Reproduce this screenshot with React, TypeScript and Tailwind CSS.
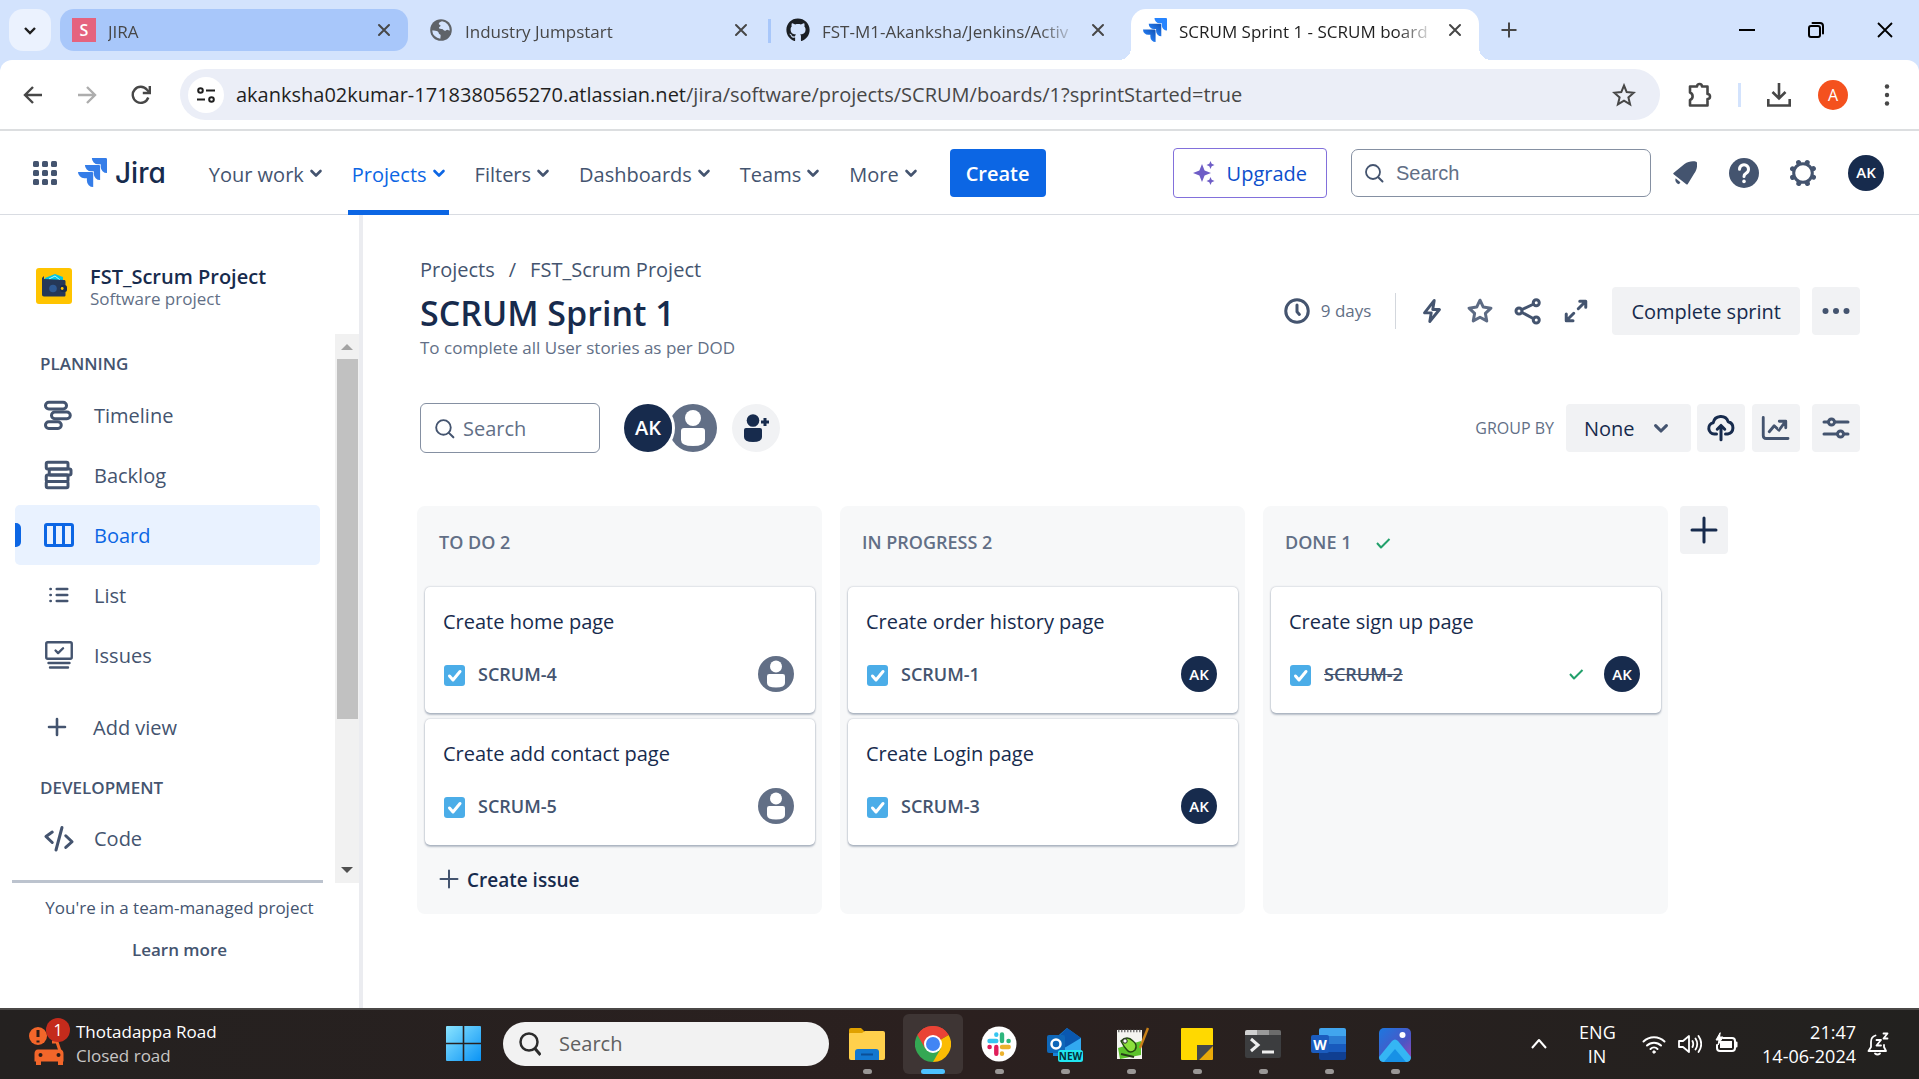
import React from "react";
import { FaGithub } from "react-icons/fa";

type Kids = { children: React.ReactNode };

function Svg({ size = 36, box = 24, children, className = "" }: { size?: number; box?: number; className?: string } & Kids) {
  return (
    <svg
      width={size}
      height={size}
      viewBox={`0 0 ${box} ${box}`}
      fill="none"
      stroke="currentColor"
      strokeWidth={2}
      strokeLinecap="round"
      strokeLinejoin="round"
      aria-hidden="true"
      className={`shrink-0 ${className}`}
    >
      {children}
    </svg>
  );
}

function JiraMark({ size }: { size: number }) {
  return (
    <svg width={size} height={size} viewBox="0 0 24 24" aria-hidden="true" className="shrink-0">
      <defs>
        <linearGradient id="jm1" x1="1" y1="0" x2="0.3" y2="0.8">
          <stop offset="0.15" stopColor="#1558bc" />
          <stop offset="1" stopColor="#2684ff" />
        </linearGradient>
      </defs>
      <path d="M11.57 11.51H0a5.22 5.22 0 0 0 5.23 5.22h2.13v2.06A5.22 5.22 0 0 0 12.58 24V12.52a1.01 1.01 0 0 0-1.01-1.01z" fill="url(#jm1)" />
      <path d="M17.3 5.76H5.72a5.22 5.22 0 0 0 5.22 5.21h2.13v2.06a5.22 5.22 0 0 0 5.22 5.21V6.76a1 1 0 0 0-1-1z" fill="url(#jm1)" />
      <path d="M23.01 0H11.46a5.22 5.22 0 0 0 5.21 5.22h2.13v2.05A5.22 5.22 0 0 0 24 12.48V1.01A1 1 0 0 0 23.01 0z" fill="#2684ff" />
    </svg>
  );
}

/* ---------- Browser ---------- */

function CloseX({ label }: { label: string }) {
  return (
    <button aria-label={label} className="grid size-6 shrink-0 place-items-center">
      <Svg size={14} box={14}>
        <path d="M2 2l10 10M12 2L2 12" />
      </Svg>
    </button>
  );
}

function Tab({ icon, title, state }: { icon: React.ReactNode; title: string; state: "group" | "idle" | "active" }) {
  const bg = state === "group" ? "h-[42px] rounded-[14px] bg-[#a8c7fa]" : state === "active" ? "h-[51px] rounded-t-[15px] bg-white pb-[9px]" : "h-[42px]";
  return (
    <div className={`relative flex w-[348px] items-center px-3 text-[#474747] ${bg}`}>
      {state === "active" && (
        <>
          <span className="absolute -left-3 bottom-0 size-3 bg-[radial-gradient(circle_at_0_0,transparent_12px,white_12px)]" />
          <span className="absolute -right-3 bottom-0 size-3 bg-[radial-gradient(circle_at_100%_0,transparent_12px,white_12px)]" />
        </>
      )}
      {icon}
      <span
        className={`ml-3 mr-2 flex-1 overflow-hidden whitespace-nowrap pt-1 text-[17px] leading-6 ${state === "active" ? "text-[#1f1f1f]" : "text-[#474747]"} [mask-image:linear-gradient(to_right,black_85%,transparent)]`}
      >
        {title}
      </span>
      <CloseX label={`Close ${title}`} />
    </div>
  );
}

function TabStrip() {
  return (
    <div className="flex h-[60px] gap-[9px] bg-[#d3e3fd] pl-[9px] pt-[9px]">
      <button aria-label="Search tabs" className="grid h-[42px] w-[42px] place-items-center rounded-[14px] bg-[#ebf2fe] text-[#1f1f1f]">
        <Svg size={14} box={14}>
          <path d="M2 5l5 5 5-5" strokeWidth="2.4" strokeLinecap="butt" strokeLinejoin="miter" />
        </Svg>
      </button>
      <Tab
        state="group"
        title="JIRA"
        icon={<span className="grid size-6 shrink-0 place-items-center bg-[#e5637f] text-[16px] font-semibold leading-6 text-white">S</span>}
      />
      <Tab
        state="idle"
        title="Industry Jumpstart"
        icon={
          <svg width="24" height="24" viewBox="0 0 24 24" aria-hidden="true" className="shrink-0">
            <circle cx="12" cy="12" r="10.8" fill="#5f6368" />
            <path
              d="M3.2 12.4c2.300 0 4.200 .3 5.600 1.100 1.300 .8 .6 2.200 1.800 2.700 1 .4 1.200 1 1 2.100l-.3 2.400A8.800 8.800 0 0 1 3.200 12.400zM13 3.300c-1.600 .4-3.300 1.500-3.200 2.600 .1 1 1.500 .6 1.700 1.500 .3 1-1.800 1.200-1.600 2.500 .2 1.200 2 .7 3.400 1.200 1 .5 1.300 1.600 2.600 1.700 1 .1 1.400-1.100 2.400-1.100.9 0 1.600 .8 2.500 .9A8.800 8.800 0 0 0 13 3.300z"
              fill="#d3e3fd"
            />
          </svg>
        }
      />
      <div className="relative">
        <span className="absolute -left-[6px] top-[10px] h-6 w-[3px] bg-[#a8c7fa]" />
        <Tab state="idle" title="FST-M1-Akanksha/Jenkins/Activ" icon={<FaGithub size={24} color="#1b1f24" className="shrink-0" />} />
      </div>
      <Tab state="active" title="SCRUM Sprint 1 - SCRUM board" icon={<JiraMark size={24} />} />
      <button aria-label="New tab" className="grid h-[42px] w-[42px] place-items-center text-[#474747]">
        <Svg size={18} box={18}>
          <path d="M9 1.500v15M1.500 9h15" strokeLinecap="butt" />
        </Svg>
      </button>
      <div className="-mt-[9px] ml-auto flex text-black">
        <button aria-label="Minimize" className="grid w-[69px] place-items-center">
          <Svg size={16} box={16}>
            <path d="M0 8h16" strokeLinecap="butt" />
          </Svg>
        </button>
        <button aria-label="Restore" className="grid w-[69px] place-items-center">
          <Svg size={16} box={16}>
            <rect x="1" y="4" width="11" height="11" rx="2" />
            <path d="M4.500 1H12a3 3 0 0 1 3 3v7.500" />
          </Svg>
        </button>
        <button aria-label="Close window" className="grid w-[69px] place-items-center">
          <Svg size={16} box={16}>
            <path d="M1 1l14 14M15 1L1 15" strokeLinecap="butt" strokeWidth="1.800" />
          </Svg>
        </button>
      </div>
    </div>
  );
}

function BarButton({ label, children, className = "" }: { label: string; className?: string } & Kids) {
  return (
    <button aria-label={label} className={`grid size-12 shrink-0 place-items-center ${className}`}>
      {children}
    </button>
  );
}

function Toolbar() {
  return (
    <div className="bg-[#d3e3fd]">
      <div className="flex h-[71px] items-center rounded-t-[12px] border-b-2 border-[#dcdee0] bg-white pl-[9px] pr-2 text-[#474747]">
        <div className="flex gap-1.5">
          <BarButton label="Back">
            <Svg size={20} box={20}>
              <path d="M19 10H2M10 2l-8 8 8 8" strokeWidth="2.400" strokeLinecap="butt" strokeLinejoin="miter" />
            </Svg>
          </BarButton>
          <BarButton label="Forward" className="text-[#adadad]">
            <Svg size={20} box={20}>
              <path d="M1 10h17M10 2l8 8-8 8" strokeWidth="2.400" strokeLinecap="butt" strokeLinejoin="miter" />
            </Svg>
          </BarButton>
          <BarButton label="Reload">
            <Svg size={20} box={20}>
              <path d="M17.300 12.500A8 8 0 1 1 16 4.800L18 7" strokeWidth="2.400" strokeLinecap="butt" />
              <path d="M18.800 1v7h-7" strokeWidth="2.400" strokeLinecap="butt" strokeLinejoin="miter" />
            </Svg>
          </BarButton>
        </div>
        <div className="ml-[15px] mr-4 flex h-[51px] flex-1 items-center rounded-full bg-[#ebeef7] pl-2 pr-6">
          <button aria-label="View site information" className="mr-3 grid size-9 shrink-0 place-items-center rounded-full bg-white text-[#1f1f1f]">
            <Svg size={18} box={18}>
              <circle cx="3.500" cy="4.500" r="2.300" />
              <path d="M9 4.500h9M0 13.500h8" strokeLinecap="butt" />
              <circle cx="14.500" cy="13.500" r="2.300" />
            </Svg>
          </button>
          <div className="min-w-0 flex-1 whitespace-nowrap text-[20px] leading-7 text-[#474747]">
            <span className="text-[#1f1f1f]">akanksha02kumar-1718380565270.atlassian.net</span>/jira/software/projects/SCRUM/boards/1?sprintStarted=true
          </div>
          <button aria-label="Bookmark this tab">
            <Svg size={24}>
              <path d="M12 2.500l2.700 6.600 7.100 .6-5.400 4.700 1.700 7-6.100-3.800-6.100 3.800 1.700-7-5.400-4.700 7.100-.6z" strokeLinejoin="miter" />
            </Svg>
          </button>
        </div>
        <BarButton label="Extensions">
          <Svg size={27} box={27}>
            <path d="M3 5.500h7a2.500 2.500 0 0 1 5 0h5.500V13a2.500 2.500 0 0 1 0 5v6.500H3V19a4 4 0 0 0 0-7.500z" strokeWidth="2.600" />
          </Svg>
        </BarButton>
        <span className="mx-[14px] h-6 w-[3px] bg-[#d3e3fd]" />
        <BarButton label="Downloads">
          <Svg size={24}>
            <path d="M12 0v15M5.500 9l6.500 6.500L18.500 9M1.300 16v6.500h21.400V16" strokeWidth="2.600" strokeLinecap="butt" strokeLinejoin="miter" />
          </Svg>
        </BarButton>
        <BarButton label="Profile" className="ml-1.5">
          <span className="grid size-[30px] place-items-center rounded-full bg-[#f4511e] text-[16px] text-white">A</span>
        </BarButton>
        <BarButton label="Menu" className="ml-1.5">
          <Svg size={24}>
            <g fill="currentColor" stroke="none">
              <circle cx="12" cy="3.500" r="2.200" />
              <circle cx="12" cy="12" r="2.200" />
              <circle cx="12" cy="20.500" r="2.200" />
            </g>
          </Svg>
        </BarButton>
      </div>
    </div>
  );
}

/* ---------- Jira header ---------- */

const nav = ["Your work", "Projects", "Filters", "Dashboards", "Teams", "More"];

function Chevron({ size = 20 }: { size?: number }) {
  return (
    <Svg size={size} box={20}>
      <path d="M5.500 8l4.500 4.500L14.500 8" strokeWidth="2.600" />
    </Svg>
  );
}

function Avatar({ className }: { className: string }) {
  return <span className={`grid shrink-0 place-items-center rounded-full bg-[#172b4d] font-semibold text-white ${className}`}>AK</span>;
}

function SearchIcon({ size = 24 }: { size?: number }) {
  return (
    <Svg size={size}>
      <circle cx="11" cy="11" r="7" strokeWidth="1.800" />
      <path d="M16.200 16.200L20.500 20.500" />
    </Svg>
  );
}

function JiraHeader() {
  return (
    <header className="flex h-[84px] items-center border-b border-[#d9dce2] bg-white pl-[33px] pr-[29px] text-[#44546f]">
      <button aria-label="Switch to" className="mr-[21px]">
        <svg width="24" height="24" viewBox="0 0 24 24" fill="currentColor" aria-hidden="true">
          {[0, 9, 18].map((y) => [0, 9, 18].map((x) => <rect key={`${x}-${y}`} x={x} y={y} width="6" height="6" rx="1.500" />))}
        </svg>
      </button>
      <a href="#home" className="mr-[39px] flex items-center gap-2">
        <svg width="29" height="29" viewBox="0 0 24 24" fill="#357de8" aria-hidden="true">
          <path d="M11.570 11.510H0a5.220 5.220 0 0 0 5.230 5.220h2.130v2.060A5.220 5.220 0 0 0 12.580 24V12.520a1.010 1.010 0 0 0-1.010-1.010z" />
          <path d="M17.300 5.760H5.720a5.220 5.220 0 0 0 5.220 5.210h2.130v2.060a5.220 5.220 0 0 0 5.220 5.210V6.760a1 1 0 0 0-1-1z" />
          <path d="M23.010 0H11.460a5.220 5.220 0 0 0 5.210 5.220h2.130v2.050A5.220 5.220 0 0 0 24 12.480V1.010A1 1 0 0 0 23.010 0z" />
        </svg>
        <span className="font-['Inter',sans-serif] text-[28px] font-medium leading-8 text-[#172b4d] [font-feature-settings:'cv11']">Jira</span>
      </a>
      <nav className="flex h-full gap-[22px]">
        {nav.map((n) => (
          <button key={n} className={`relative flex items-center gap-0.5 pl-1 text-[20px] font-medium leading-7 ${n === "Projects" ? "text-[#0c66e4]" : ""}`}>
            <span className="pt-1">{n}</span>
            <Chevron />
            {n === "Projects" && <span className="absolute -bottom-px left-0 right-0 h-[5px] bg-[#0c66e4]" />}
          </button>
        ))}
      </nav>
      <button className="ml-[29px] h-12 rounded-[4px] bg-[#0c66e4] px-4 pt-0.5 text-[20px] font-semibold text-white">Create</button>
      <button className="ml-auto flex h-[50px] items-center gap-3 rounded-[4px] border border-[#8270db] px-[19px] text-[20px] font-medium text-[#0c4fcc]">
        <svg width="22" height="24" viewBox="0 0 22 24" fill="#6e5dc6" aria-hidden="true">
          <path d="M9 3l2.600 6.400L18 12l-6.400 2.600L9 21l-2.600-6.400L0 12l6.400-2.600z" />
          <path d="M17.500 0l1.200 2.800L21.500 4l-2.800 1.200L17.500 8l-1.200-2.800L13.500 4l2.800-1.200zM17.500 16l1.200 2.800 2.800 1.200-2.800 1.200-1.200 2.800-1.200-2.800-2.800-1.200 2.800-1.200z" />
        </svg>
        <span className="pt-0.5">Upgrade</span>
      </button>
      <label className="ml-6 mr-2.5 flex h-12 w-[300px] items-center gap-2.5 rounded-[7px] border border-[#8590a2] px-2.5">
        <SearchIcon />
        <input aria-label="Search Jira" placeholder="Search" className="w-full min-w-0 font-['Liberation_Sans',sans-serif] text-[20px] outline-none placeholder:text-[#626f86]" />
      </label>
      <div className="flex items-center gap-[11px]">
        <BarButton label="Notifications">
          <svg width="24" height="24" viewBox="0 0 24 24" fill="currentColor" aria-hidden="true">
            <path d="M.5 12L11.500 3C15 .4 20-.2 23.200 .8q.8.3.8 1C24.500 5.500 23.600 9 21.200 12.600L14.800 23q-.6 1-1.500 .3L.6 13.300q-.7-.6-.1-1.300z" />
            <path d="M2.600 17.200L7.400 21.300 6 23.200A4.500 4.500 0 0 1 2.600 17.200z" />
          </svg>
        </BarButton>
        <BarButton label="Help">
          <Svg size={36}>
            <circle cx="12" cy="12" r="10" fill="currentColor" stroke="none" />
            <path d="M9 9.500a3 3 0 1 1 4.500 2.600c-1 .6-1.500 1-1.500 2.200" stroke="#fff" />
            <circle cx="12" cy="17.600" r="1.200" fill="#fff" stroke="none" />
          </Svg>
        </BarButton>
        <BarButton label="Settings">
          <Svg size={30} box={30}>
            <circle cx="15" cy="15" r="9.300" strokeWidth="3" />
            {[22, 67, 112, 157, 202, 247, 292, 337].map((a) => (
              <path key={a} d="M15 4.200V3.700" strokeWidth="5" transform={`rotate(${a} 15 15)`} />
            ))}
          </Svg>
        </BarButton>
        <BarButton label="Account" className="ml-1">
          <Avatar className="size-9 text-[15px]" />
        </BarButton>
      </div>
    </header>
  );
}

/* ---------- Sidebar ---------- */

const sideIcons: Record<string, React.ReactNode> = {
  Timeline: (
    <g>
      <rect x="3" y="3.500" width="14" height="4.500" rx="2.200" />
      <rect x="7" y="10" width="12.500" height="4.500" rx="2.200" />
      <rect x="3" y="16.500" width="10.500" height="4.500" rx="2.200" />
    </g>
  ),
  Backlog: (
    <g>
      <rect x="3.500" y="3.500" width="14.500" height="4.500" rx="1" />
      <rect x="5.500" y="8" width="14.500" height="4" rx="1" />
      <rect x="3.500" y="12" width="14.500" height="4.300" rx="1" />
      <rect x="3.500" y="16.300" width="14.500" height="4.200" rx="1" />
    </g>
  ),
  Board: (
    <g>
      <rect x="3" y="5" width="18" height="14" rx="1" />
      <path d="M9 5v14M15 5v14" />
    </g>
  ),
  List: (
    <g strokeWidth="1.700">
      <path d="M6.300 8h.2M6.300 12h.2M6.300 16h.2M10.500 8h7M10.500 12h7M10.500 16h7" />
    </g>
  ),
  Issues: (
    <g strokeWidth="1.600">
      <rect x="3.500" y="3.500" width="17" height="11" rx="1" />
      <path d="M9.700 9l1.700 1.700L14.700 7.500M5 17.300h14M6 20.300h12" />
    </g>
  ),
  Code: (
    <g>
      <path d="M7.500 8l-4.200 3 4.200 4M16.500 10.500l4.200 4-4.200 3.800M14 5l-4 15" />
    </g>
  ),
};

function SideLink({ name, active = false }: { name: string; active?: boolean }) {
  return (
    <a
      href={`#${name.toLowerCase()}`}
      className={`relative ml-[15px] flex h-[60px] w-[305px] items-center overflow-hidden rounded-[5px] pl-[26px] text-[20px] leading-7 ${active ? "bg-[#e9f2ff] text-[#0c66e4]" : ""}`}
    >
      {active && <span className="absolute left-0 top-[18px] h-6 w-1.5 rounded-r-[5px] bg-[#0c66e4]" />}
      <Svg>{sideIcons[name]}</Svg>
      <span className="ml-[17px] pt-0.5">{name}</span>
    </a>
  );
}

function Sidebar() {
  return (
    <aside className="flex w-[363px] shrink-0 flex-col border-r-4 border-[#ebecf0] pt-[53px] text-[#44546f]">
      <div className="flex h-[66px] items-start pl-9">
        <svg width="36" height="36" viewBox="0 0 36 36" aria-hidden="true">
          <rect width="36" height="36" rx="3" fill="#ffc400" />
          <path d="M9 10l10-4 8 3v4H8z" fill="#00c7e5" />
          <path d="M13 11l6-3 5 4" stroke="#b3f5ff" fill="none" />
          <path d="M6 10l2-2v3l20 1c1 0 1.500.5 1.500 1.500V27c0 1-.5 1.500-1.500 1.500H8c-1.300 0-2-.7-2-2z" fill="#253858" />
          <circle cx="17" cy="20.500" r="3.800" fill="#2f5a94" />
          <rect x="24" y="17" width="7" height="7" rx="2.500" fill="#172b4d" />
          <circle cx="26.200" cy="20.500" r="1.400" fill="#ffc400" />
        </svg>
        <div className="-mt-[3px] ml-[18px]">
          <div className="text-[20px] font-semibold leading-6 text-[#172b4d]">FST_Scrum Project</div>
          <div className="text-[17px] leading-5 text-[#626f86]">Software project</div>
        </div>
      </div>
      <div className="flex h-[549px]">
        <nav className="relative flex w-[335px] flex-col overflow-hidden pt-3">
          <h2 className="mb-1 pl-10 text-[17px] font-semibold leading-[35px]">PLANNING</h2>
          <SideLink name="Timeline" />
          <SideLink name="Backlog" />
          <SideLink name="Board" active />
          <SideLink name="List" />
          <SideLink name="Issues" />
          <button className="mt-3 flex h-[60px] items-center pl-[45px] text-[20px] leading-7">
            <Svg size={24}>
              <path d="M12 4v16M4 12h16" strokeWidth="2.600" />
            </Svg>
            <span className="ml-6 pt-0.5">Add view</span>
          </button>
          <h2 className="mt-[13px] pl-10 text-[17px] font-semibold leading-[35px]">DEVELOPMENT</h2>
          <div className="mt-[3px]">
            <SideLink name="Code" />
          </div>
          <span className="absolute bottom-0 left-3 right-3 h-[3px] bg-[#bcc3ce]" />
        </nav>
        <div className="flex w-6 flex-col items-center bg-[#f1f1f1]">
          <span className="mt-[10px] border-x-[6px] border-b-[6px] border-x-transparent border-b-[#a3a3a3]" />
          <span className="mt-[9px] h-[360px] w-[21px] bg-[#c1c1c1]" />
          <span className="mb-[10px] mt-auto border-x-[6px] border-t-[6px] border-x-transparent border-t-[#505050]" />
        </div>
      </div>
      <div className="flex flex-col items-center pt-[13px] text-[17px] leading-6">
        <p>You're in a team-managed project</p>
        <a href="#learn" className="mt-[18px] font-semibold">
          Learn more
        </a>
      </div>
    </aside>
  );
}

/* ---------- Board ---------- */

function IconButton({ label, children, className = "" }: { label: string; className?: string } & Kids) {
  return (
    <button aria-label={label} className={`grid size-12 shrink-0 place-items-center rounded-[4px] bg-[#f1f2f4] ${className}`}>
      {children}
    </button>
  );
}

function Person({ size }: { size: number }) {
  return (
    <svg width={size} height={size} viewBox="0 0 48 48" role="img" aria-label="Unassigned" className="shrink-0">
      <circle cx="24" cy="24" r="24" fill="#626f86" />
      <circle cx="24" cy="14" r="8" fill="#fff" />
      <path d="M15 24h18q3 0 3 3v9q0 6-12 6t-12-6v-9q0-3 3-3z" fill="#fff" />
    </svg>
  );
}

function Tick() {
  return (
    <Svg size={16} box={16} className="text-[#22a06b]">
      <path d="M2 8l4 4.500L14.500 4" strokeLinecap="butt" />
    </Svg>
  );
}

type Issue = { key: string; title: string; mine?: boolean; done?: boolean };

function Card({ issue }: { issue: Issue }) {
  return (
    <article className="rounded-[5px] bg-white px-[18px] pb-[21px] pr-[21px] pt-5 text-[#172b4d] shadow-[0_2px_2px_rgba(9,30,66,0.25),0_0_2px_rgba(9,30,66,0.31)]">
      <h3 className="text-[20px] leading-[30px]">{issue.title}</h3>
      <div className="mt-[19px] flex h-9 items-center">
        <svg width="23" height="23" viewBox="0 0 23 23" role="img" aria-label="Task" className="mt-[3px]">
          <rect x="1" y="1" width="21" height="21" rx="3" fill="#4bade8" />
          <path d="M6.500 12l3.500 4L17 7.500" stroke="#fff" strokeWidth="3" fill="none" strokeLinecap="round" strokeLinejoin="round" />
        </svg>
        <span className={`ml-3 text-[18px] font-semibold leading-6 text-[#44546f] ${issue.done ? "line-through" : ""}`}>{issue.key}</span>
        <span className="ml-auto flex items-center gap-5">
          {issue.done && <Tick />}
          {issue.mine ? <Avatar className="size-9 text-[15px]" /> : <Person size={36} />}
        </span>
      </div>
    </article>
  );
}

const columns: { name: string; done?: boolean; create?: boolean; issues: Issue[] }[] = [
  { name: "TO DO 2", create: true, issues: [{ key: "SCRUM-4", title: "Create home page" }, { key: "SCRUM-5", title: "Create add contact page" }] },
  { name: "IN PROGRESS 2", issues: [{ key: "SCRUM-1", title: "Create order history page", mine: true }, { key: "SCRUM-3", title: "Create Login page", mine: true }] },
  { name: "DONE 1", done: true, issues: [{ key: "SCRUM-2", title: "Create sign up page", mine: true, done: true }] },
];

function Board() {
  return (
    <main className="min-w-0 flex-1 pl-[54px] pr-[59px] pt-[41px] text-[#44546f]">
      <div className="flex items-start justify-between pl-[3px]">
        <div>
          <nav className="flex gap-3.5 text-[20px] leading-7">
            <a href="#projects">Projects</a>
            <span>/</span>
            <a href="#fst">FST_Scrum Project</a>
          </nav>
          <h1 className="mt-1 text-[34px] font-semibold leading-[50px] text-[#172b4d]">SCRUM Sprint 1</h1>
          <p className="-mt-0.5 text-[17px] leading-6 text-[#626f86]">To complete all User stories as per DOD</p>
        </div>
        <div className="mt-[31px] flex items-center">
          <Svg>
            <circle cx="12" cy="12" r="7.500" />
            <path d="M12 8v4.500l1.600 1.800" />
          </Svg>
          <span className="ml-1.5 text-[17px] text-[#626f86]">9 days</span>
          <span className="ml-6 mr-3 h-9 w-px bg-[#d3d7dd]" />
          <BarButton label="Automation">
            <Svg>
              <path d="M13.500 5L7 13.200h4.500L10.500 19l6.500-8h-4.500z" strokeWidth="1.900" />
            </Svg>
          </BarButton>
          <BarButton label="Star board" className="text-[#5d6b84]">
            <Svg>
              <path d="M12 4.800l2.200 4.600 5.100.7-3.700 3.500.9 5-4.500-2.400-4.500 2.400.9-5-3.700-3.500 5.100-.7z" />
            </Svg>
          </BarButton>
          <BarButton label="Share">
            <Svg>
              <circle cx="6" cy="12" r="2" />
              <circle cx="17.500" cy="6.500" r="2" />
              <circle cx="17.500" cy="18" r="2" />
              <path d="M8 11l7.500-3.500M8 13l7.500 4" />
            </Svg>
          </BarButton>
          <BarButton label="Full screen">
            <Svg>
              <path d="M14.500 5.500h4v4M18 6l-4.500 4.500M5.500 14v4.500h4.500M6 18l4.500-4.500" />
            </Svg>
          </BarButton>
          <button className="ml-3 h-12 rounded-[4px] bg-[#f1f2f4] px-[19px] pt-0.5 text-[20px] font-medium text-[#172b4d]">Complete sprint</button>
          <IconButton label="More actions" className="ml-3">
            <Svg size={36}>
              <g fill="currentColor" stroke="none">
                <circle cx="5" cy="12" r="2" />
                <circle cx="12" cy="12" r="2" />
                <circle cx="19" cy="12" r="2" />
              </g>
            </Svg>
          </IconButton>
        </div>
      </div>

      <div className="mt-[43px] flex h-[50px] items-center pl-[3px]">
        <label className="flex h-[50px] w-[180px] items-center gap-1.5 rounded-[6px] border border-[#8590a2] px-[11px]">
          <SearchIcon size={25} />
          <input aria-label="Search board" placeholder="Search" className="w-full min-w-0 pt-0.5 text-[20px] outline-none placeholder:text-[#626f86]" />
        </label>
        <div className="ml-6 flex">
          <button aria-label="Filter by AK" className="z-10 -my-[3px] -ml-[3px] -mr-1.5 rounded-full border-[3px] border-white">
            <Avatar className="size-12 text-[20px]" />
          </button>
          <button aria-label="Filter by unassigned">
            <Person size={48} />
          </button>
        </div>
        <button aria-label="Add people" className="ml-[15px] grid size-12 place-items-center rounded-full bg-[#f1f2f4]">
          <svg width="28" height="28" viewBox="0 0 28 28" fill="#172b4d" aria-hidden="true">
            <circle cx="11" cy="6.500" r="6.300" />
            <path d="M4 14h14q2 0 2 2v7q0 5-9 5t-9-5v-7q0-2 2-2z" />
            <path d="M23 4v8M19 8h8" stroke="#172b4d" strokeWidth="3" />
          </svg>
        </button>
        <label htmlFor="group-by" className="ml-auto mr-3 text-[16px] text-[#626f86]">
          GROUP BY
        </label>
        <div className="relative flex text-[#172b4d]">
          <select id="group-by" className="h-12 w-[125px] appearance-none rounded-[4px] bg-[#f1f2f4] pl-[18px] pt-0.5 text-[20px] font-medium">
            <option>None</option>
          </select>
          <span className="pointer-events-none absolute right-[18px] top-3 text-[#44546f]">
            <Chevron size={24} />
          </span>
        </div>
        <IconButton label="Import work" className="ml-1.5 text-[#172b4d]">
          <Svg>
            <path d="M9 16H7.500a3.800 3.800 0 0 1-.7-7.500 5.200 5.200 0 0 1 10-.7A4.200 4.200 0 0 1 16.500 16H15M12 19.800v-9M9.500 12.800l2.500-2.500 2.500 2.500" />
          </Svg>
        </IconButton>
        <IconButton label="Insights" className="ml-[7px]">
          <Svg>
            <path d="M3.500 5v12q0 2 2 2H20M7.500 14.500l3.300-4 3.200 3L18 8M14.200 7.500h4.300v4.300" strokeWidth="1.900" />
          </Svg>
        </IconButton>
        <IconButton label="View settings" className="ml-3">
          <Svg>
            <path d="M4 8h3M11.500 8H20M4 16h8.500M17.500 16H20" />
            <circle cx="9" cy="8" r="2" />
            <circle cx="15" cy="16" r="2" />
          </Svg>
        </IconButton>
      </div>

      <div className="mt-[53px] flex gap-[18px]">
        {columns.map((c) => (
          <section key={c.name} className="flex min-h-[408px] w-[405px] flex-col rounded-[8px] bg-[#f7f8f9] pl-2 pr-[7px]">
            <h2 className="flex h-[81px] items-center gap-6 pb-2 pl-3.5 text-[18px] font-semibold text-[#626f86]">
              {c.name}
              {c.done && <Tick />}
            </h2>
            <div className="flex flex-col gap-1.5">
              {c.issues.map((i) => (
                <Card key={i.key} issue={i} />
              ))}
            </div>
            {c.create && (
              <button className="mt-[18px] flex items-center gap-2 pl-3.5 text-[19px] font-semibold leading-[30px] text-[#172b4d]">
                <Svg size={20} box={20} className="text-[#44546f]">
                  <path d="M10 1.500v17M1.500 10h17" />
                </Svg>
                <span className="pt-0.5">Create issue</span>
              </button>
            )}
          </section>
        ))}
        <IconButton label="Create column" className="-ml-1.5 text-[#172b4d]">
          <Svg size={30} box={30}>
            <path d="M15 3v24M3 15h24" strokeWidth="3" />
          </Svg>
        </IconButton>
      </div>
    </main>
  );
}

/* ---------- Taskbar ---------- */

function AppSvg({ children }: Kids) {
  return (
    <svg width="36" height="36" viewBox="0 0 36 36" aria-hidden="true">
      {children}
    </svg>
  );
}

const apps: { name: string; icon: React.ReactNode }[] = [
  {
    name: "File Explorer",
    icon: (
      <AppSvg>
        <path d="M0 4q0-2 2-2h10l4 4v6H0z" fill="#e0a100" />
        <path d="M0 8q0-1 1-1h12l3-2h18q2 0 2 2v25q0 2-2 2H2q-2 0-2-2z" fill="#ffd04c" />
        <path d="M6 34V26q0-3 3-3h18q3 0 3 3v8z" fill="#1277cf" />
        <path d="M12 28.500h12" stroke="#0b4f96" strokeWidth="2" />
      </AppSvg>
    ),
  },
  {
    name: "Chrome",
    icon: (
      <AppSvg>
        <path d="M18 18L2.400 9A18 18 0 0 1 33.600 9z" fill="#ea4335" />
        <path d="M18 18l15.600-9A18 18 0 0 1 18 36z" fill="#fbbc04" />
        <path d="M18 18l7.800 4.500L18 36A18 18 0 0 1 2.400 9z" fill="#34a853" />
        <path d="M18 9h15.600A18 18 0 0 0 2.400 9l7.800 13.500z" fill="#ea4335" />
        <circle cx="18" cy="18" r="9" fill="#fff" />
        <circle cx="18" cy="18" r="7" fill="#4285f4" />
      </AppSvg>
    ),
  },
  {
    name: "Slack",
    icon: (
      <AppSvg>
        <circle cx="18" cy="18" r="17.500" fill="#fff" />
        <g strokeWidth="4.400" strokeLinecap="round" fill="none">
          <path d="M15.300 8.500v.2M8.500 15h6.800" stroke="#36c5f0" />
          <path d="M21 8.500V15M27.500 15h.2" stroke="#2eb67d" />
          <path d="M21 21h6.700M21 27.500v.2" stroke="#ecb22e" />
          <path d="M15.300 21v6.700M8.500 21h.2" stroke="#e01e5a" />
        </g>
      </AppSvg>
    ),
  },
  {
    name: "Outlook",
    icon: (
      <AppSvg>
        <path d="M6 14L20 2l14 10v18H6z" fill="#1682d8" />
        <path d="M20 2l14 10-14 12-8-14z" fill="#0a58b0" />
        <path d="M14 24l20-12v14q0 6-6 6H14z" fill="#32a8f0" />
        <rect x="0" y="9" width="18" height="18" rx="2" fill="#0f67b8" />
        <circle cx="9" cy="18" r="4.500" fill="none" stroke="#fff" strokeWidth="2.500" />
        <rect x="11" y="24" width="25" height="12" rx="2.500" fill="#21e5f0" />
        <text x="23.500" y="33.500" fontSize="10" fontWeight="700" textAnchor="middle" fill="#06303a">
          NEW
        </text>
      </AppSvg>
    ),
  },
  {
    name: "Notepad++",
    icon: (
      <AppSvg>
        <rect x="4" y="4" width="25" height="29" fill="#f4f4f0" />
        <path d="M5 5h23" stroke="#777" strokeWidth="2.500" strokeDasharray="1.500 1.500" />
        <path d="M5 22l23-7v14l-21 4z" fill="#5cc32c" />
        <path d="M8 15q6-6 12 0 5 4 2 9-5 4-8 0-3-3-6-9z" fill="#8be03c" stroke="#234a12" strokeWidth="1.500" />
        <circle cx="12" cy="15" r="2.200" fill="#fff" stroke="#222" />
        <path d="M8 28l13 3" stroke="#263b18" strokeWidth="2" />
        <path d="M35 2l-8 20" stroke="#c98118" strokeWidth="2.500" />
      </AppSvg>
    ),
  },
  {
    name: "Sticky Notes",
    icon: (
      <AppSvg>
        <path d="M2 3q0-1 1-1h30q1 0 1 1v16L18 34H3q-1 0-1-1z" fill="#ffd900" />
        <path d="M18 19h16v2L20 34h-2z" fill="#45474a" />
        <path d="M34 20v13q0 1-1 1H20z" fill="#e9aa09" />
      </AppSvg>
    ),
  },
  {
    name: "Terminal",
    icon: (
      <AppSvg>
        <rect x="0" y="4" width="36" height="28" rx="2" fill="#3c3d3f" />
        <path d="M0 9V6q0-2 2-2h10v5z" fill="#d0d0d0" />
        <path d="M12 4h12v5H12z" fill="#9a9a9a" />
        <path d="M24 4h10q2 0 2 2v3H24z" fill="#6c6c6c" />
        <path d="M6 13l7 6-7 6" stroke="#eee" strokeWidth="3" fill="none" />
        <path d="M17 26h12" stroke="#eee" strokeWidth="3" />
      </AppSvg>
    ),
  },
  {
    name: "Word",
    icon: (
      <AppSvg>
        <path d="M8 4q0-2 2-2h23q2 0 2 2v6H8z" fill="#41a5ee" />
        <path d="M8 10h27v8H8z" fill="#2b7cd3" />
        <path d="M8 18h27v8H8z" fill="#185abd" />
        <path d="M8 26h27v6q0 2-2 2H10q-2 0-2-2z" fill="#103f91" />
        <rect x="0" y="9" width="18" height="18" rx="2" fill="#1b5cbe" />
        <text x="9" y="23.500" fontSize="14" fontWeight="700" textAnchor="middle" fill="#fff">
          W
        </text>
      </AppSvg>
    ),
  },
  {
    name: "Photos",
    icon: (
      <AppSvg>
        <defs>
          <linearGradient id="ph" x1="0" y1="0" x2="1" y2="1">
            <stop offset="0" stopColor="#1c78e0" />
            <stop offset="0.600" stopColor="#4c55c4" />
            <stop offset="1" stopColor="#9a48b8" />
          </linearGradient>
        </defs>
        <rect x="2" y="2" width="32" height="34" rx="5" fill="url(#ph)" />
        <path d="M2 31L15 15q3-3 6 0l13 16q0 5-5 5H7q-5 0-5-5z" fill="#35b6f4" />
        <path d="M7 36l11-13 11 13z" fill="#1791e6" />
        <circle cx="25.500" cy="9" r="3" fill="#fff" />
      </AppSvg>
    ),
  },
];

function Taskbar() {
  return (
    <footer className="flex h-[71px] items-center border-t-2 border-[#4b4847] bg-linear-to-r from-[#242120] via-[#2b201f] to-[#22211f] pb-0.5 text-white">
      <button className="flex items-center pl-7 text-left">
        <span className="relative h-12 w-12">
          <svg width="44" height="48" viewBox="0 0 44 48" aria-hidden="true">
            <g fill="none" stroke="#f2662a" strokeWidth="3">
              <path d="M24 22h5l3 9" />
              <path d="M10 31h22q2 0 2 3v6H8v-6q0-3 2-3z" fill="#f2662a" />
              <path d="M10.500 40v5M32.500 40v5" strokeWidth="5" />
            </g>
            <circle cx="10" cy="16" r="9" fill="#f2662a" />
            <path d="M10 10v7M10 20.500v2" stroke="#2a1c18" strokeWidth="3" />
            <circle cx="12.500" cy="35" r="2" fill="#2a1c18" />
            <circle cx="30.500" cy="35" r="2" fill="#2a1c18" />
          </svg>
          <span className="absolute -top-0.5 left-[18px] grid size-6 place-items-center rounded-full bg-[#c42b1c] text-[16px] leading-6">1</span>
        </span>
        <span className="text-[17px] leading-6">
          <span className="block">Thotadappa Road</span>
          <span className="block text-[#c8c6c5]">Closed road</span>
        </span>
      </button>
      <div className="ml-auto flex items-center">
        <button aria-label="Start">
          <svg width="35" height="35" viewBox="0 0 35 35" aria-hidden="true">
            <defs>
              <linearGradient id="win" x1="0" y1="0" x2="1" y2="1">
                <stop offset="0" stopColor="#8ae4ff" />
                <stop offset="1" stopColor="#0a93f5" />
              </linearGradient>
            </defs>
            <path d="M0 1q0-1 1-1h15.700v16.700H0zM18.300 0H34q1 0 1 1v15.700H18.300zM0 18.300h16.700V35H1q-1 0-1-1zM18.300 18.300H35V34q0 1-1 1H18.300z" fill="url(#win)" />
          </svg>
        </button>
        <label className="ml-[22px] mr-2 flex h-11 w-[326px] items-center gap-[18px] rounded-full bg-[#f2f2f2] px-4 text-[#2b2b2b]">
          <svg width="22" height="24" viewBox="0 0 22 24" fill="none" stroke="currentColor" strokeWidth="2.500" aria-hidden="true" className="shrink-0">
            <circle cx="10" cy="10" r="8.500" />
            <path d="M15.500 16l6 7" strokeWidth="3" />
          </svg>
          <input aria-label="Search Windows" placeholder="Search" className="w-full min-w-0 text-[20px] outline-none placeholder:text-[#606060]" />
        </label>
        <div className="flex gap-1.5">
          {apps.map((a) => {
            const on = a.name === "Chrome";
            return (
              <button key={a.name} aria-label={a.name} className={`relative grid size-[60px] place-items-center rounded-[6px] ${on ? "bg-[#3e3534]" : ""}`}>
                {a.icon}
                <span className={`absolute bottom-0 h-[5px] rounded-full ${on ? "w-6 bg-[#4cc2ff]" : "w-[9px] bg-[#9a9796]"}`} />
              </button>
            );
          })}
        </div>
      </div>
      <div className="ml-[105px] flex items-center pr-[29px] text-[18px] leading-6">
        <button aria-label="Show hidden icons">
          <Svg size={18} box={18}>
            <path d="M2 13l7-8 7 8" strokeLinecap="butt" />
          </Svg>
        </button>
        <button className="ml-[31px] w-9 text-center">
          ENG
          <br />
          IN
        </button>
        <button aria-label="Network, volume and battery" className="ml-[27px] flex items-center gap-3">
          <Svg size={24}>
            <path d="M1.500 9.500a15 15 0 0 1 21 0M5 13.500a10 10 0 0 1 14 0M8.500 17a5 5 0 0 1 7 0" />
            <circle cx="12" cy="20" r="1.200" fill="currentColor" strokeWidth="1" />
          </Svg>
          <Svg size={24}>
            <path d="M1 9h4l6-5v16l-6-5H1z" strokeWidth="1.800" />
            <path d="M14.500 9q1.500 3 0 6M17.500 6.500q3.500 5.500 0 11M20.500 4q5.500 8 0 16" strokeWidth="1.800" />
          </Svg>
          <Svg size={24}>
            <path d="M9 6h9q3 0 3 3v7q0 3-3 3H6q-3 0-3-3v-3M22.500 10.500v4" />
            <rect x="6" y="9" width="12" height="7" fill="currentColor" stroke="none" />
            <path d="M6 1L2 8h3l-1 5 5-8H6z" fill="currentColor" strokeWidth="1" />
          </Svg>
        </button>
        <button className="ml-6 flex items-center gap-2.5 text-right">
          <span>
            21:47
            <br />
            14-06-2024
          </span>
          <Svg size={24}>
            <path d="M9.500 3.500C6 4.500 5 7 5 10v5l-2.500 4H20l-2-4v-2M9 21.500q2.500 2 5 0" strokeWidth="1.800" />
            <path d="M10.500 8h4.500l-4.500 5.500h4.500M17.500 1.500h4l-4 5h4" strokeWidth="1.800" />
          </Svg>
        </button>
      </div>
    </footer>
  );
}

export default function App() {
  return (
    <div className="flex min-h-screen flex-col bg-white font-['Open_Sans','Noto_Sans',sans-serif]">
      <TabStrip />
      <Toolbar />
      <JiraHeader />
      <div className="flex flex-1">
        <Sidebar />
        <Board />
      </div>
      <Taskbar />
    </div>
  );
}
